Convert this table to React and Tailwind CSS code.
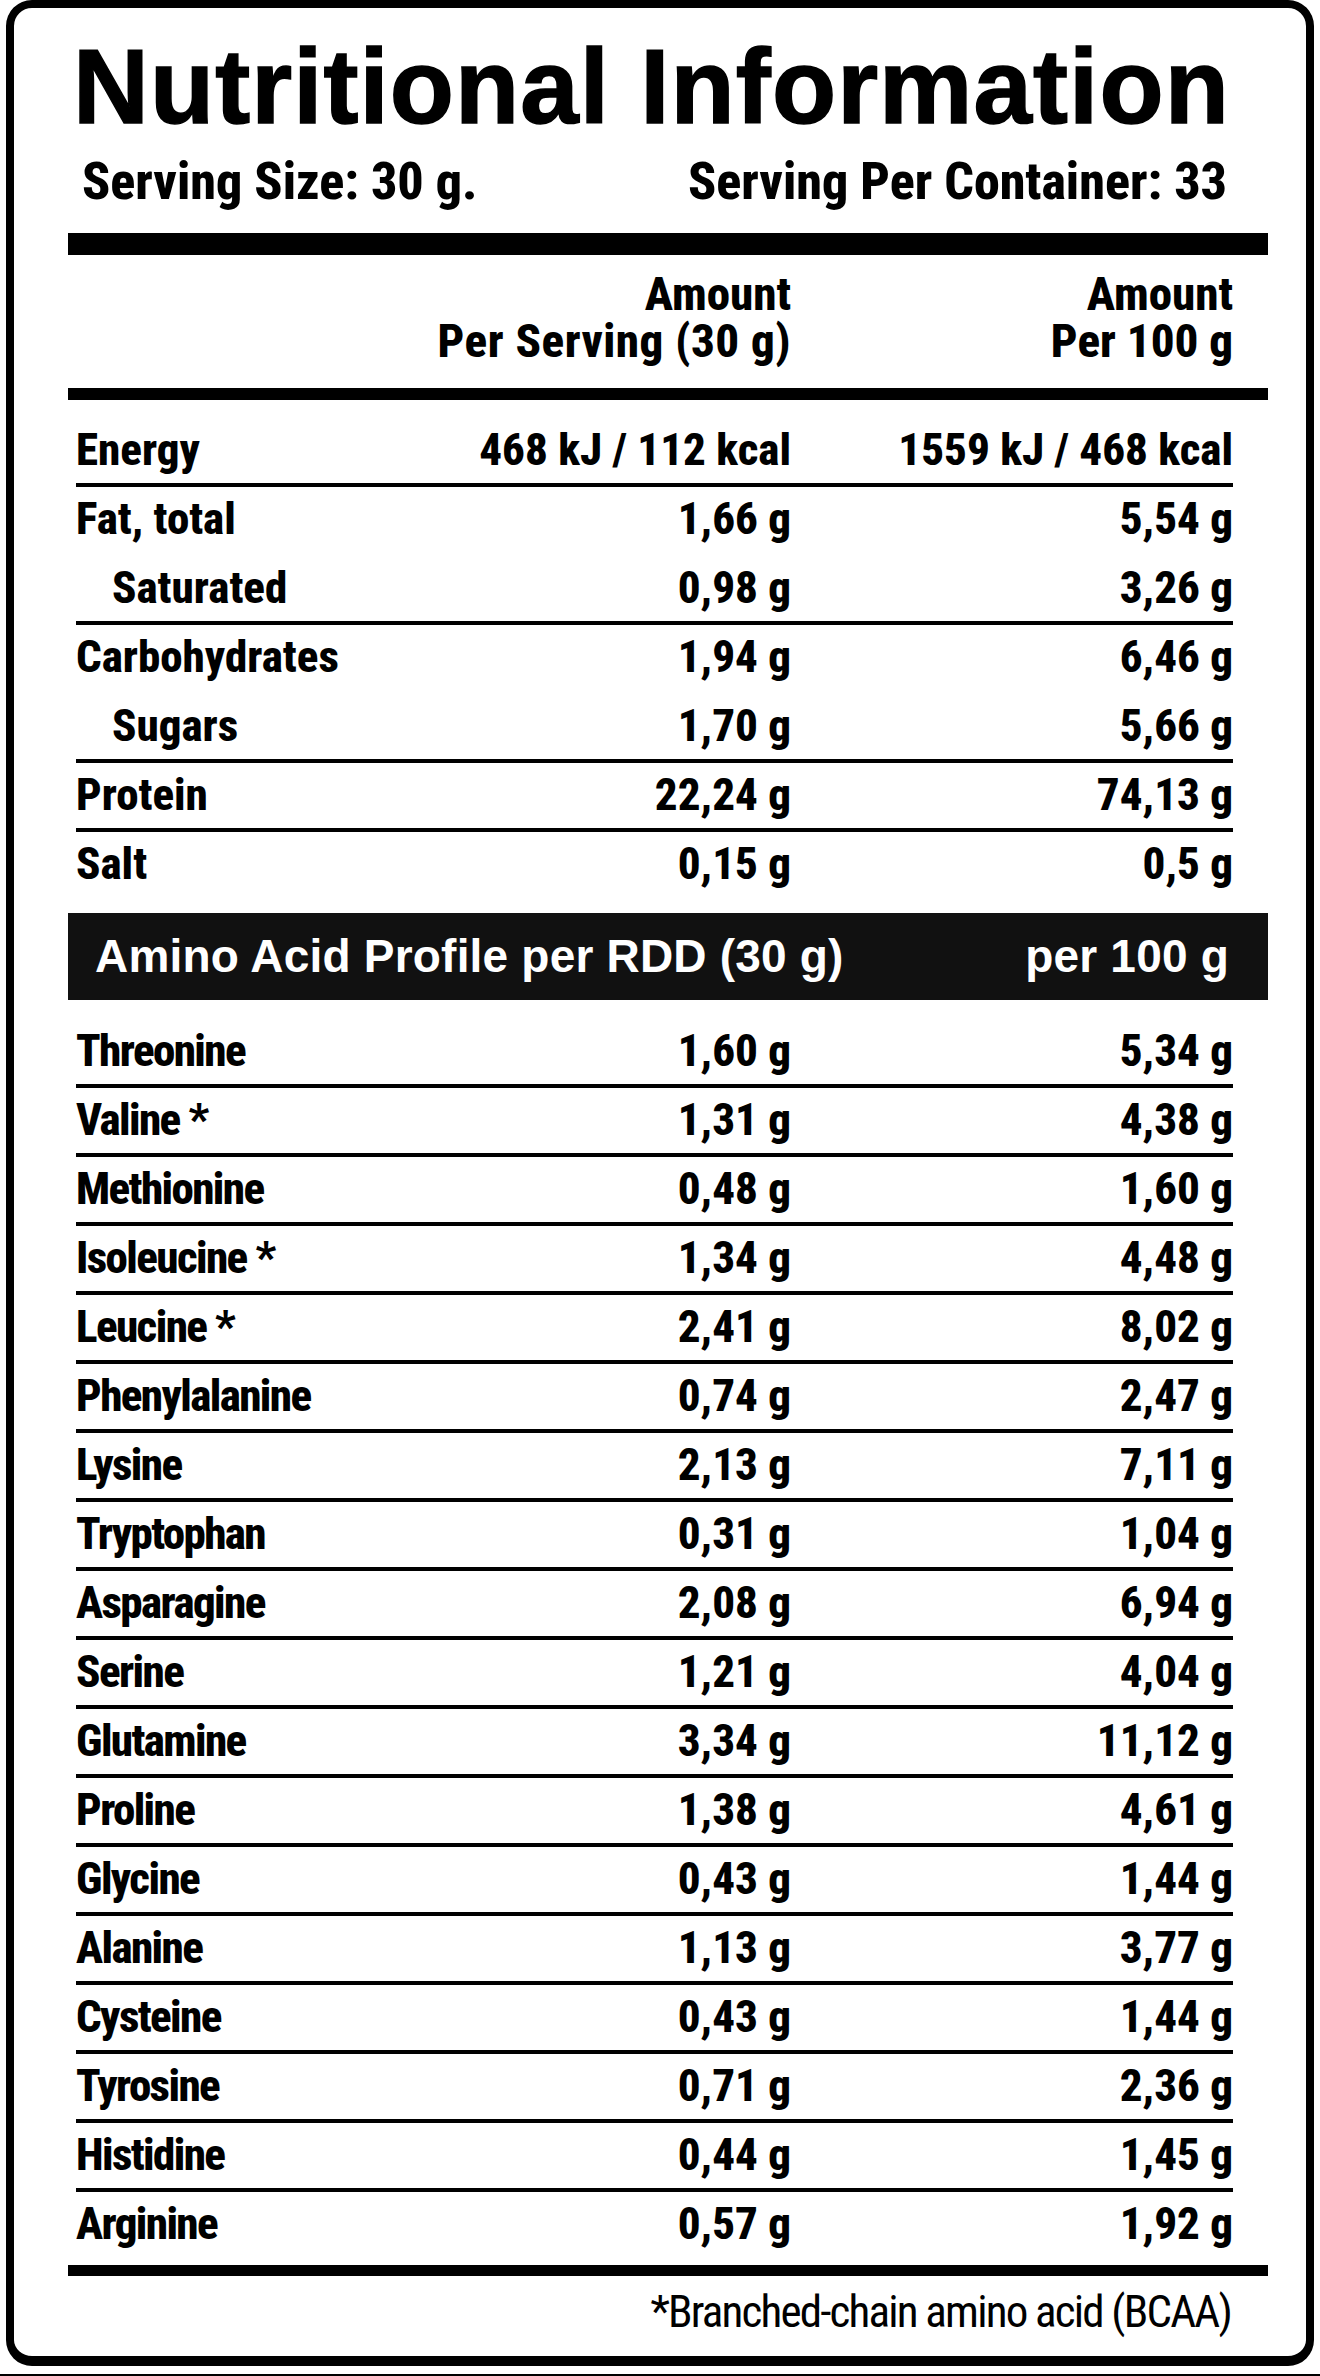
import React from 'react'

const nutrients = [
  { name: 'Energy', serving: '468 kJ / 112 kcal', per100: '1559 kJ / 468 kcal', line: true },
  { name: 'Fat, total', serving: '1,66 g', per100: '5,54 g' },
  { name: 'Saturated', serving: '0,98 g', per100: '3,26 g', sub: true, line: true },
  { name: 'Carbohydrates', serving: '1,94 g', per100: '6,46 g' },
  { name: 'Sugars', serving: '1,70 g', per100: '5,66 g', sub: true, line: true },
  { name: 'Protein', serving: '22,24 g', per100: '74,13 g', line: true },
  { name: 'Salt', serving: '0,15 g', per100: '0,5 g' },
]

const aminos = [
  ['Threonine', '1,60 g', '5,34 g'],
  ['Valine *', '1,31 g', '4,38 g'],
  ['Methionine', '0,48 g', '1,60 g'],
  ['Isoleucine *', '1,34 g', '4,48 g'],
  ['Leucine *', '2,41 g', '8,02 g'],
  ['Phenylalanine', '0,74 g', '2,47 g'],
  ['Lysine', '2,13 g', '7,11 g'],
  ['Tryptophan', '0,31 g', '1,04 g'],
  ['Asparagine', '2,08 g', '6,94 g'],
  ['Serine', '1,21 g', '4,04 g'],
  ['Glutamine', '3,34 g', '11,12 g'],
  ['Proline', '1,38 g', '4,61 g'],
  ['Glycine', '0,43 g', '1,44 g'],
  ['Alanine', '1,13 g', '3,77 g'],
  ['Cysteine', '0,43 g', '1,44 g'],
  ['Tyrosine', '0,71 g', '2,36 g'],
  ['Histidine', '0,44 g', '1,45 g'],
  ['Arginine', '0,57 g', '1,92 g'],
]

const condensed = { fontFamily: '"Roboto Condensed", Roboto, sans-serif', fontStretch: 'condensed' }

const Row = ({ name, serving, per100, sub, line, tight }) => (
  <div className={`flex h-[69px] border-b-4 ${line ? 'border-black' : 'border-transparent'}`}>
    <div className={`flex-1 leading-[64px] ${sub ? 'pl-[36px]' : ''} ${tight ? 'tracking-[-1.6px]' : ''}`}>{name}</div>
    <div className="w-[400px] text-right leading-[64px]">{serving}</div>
    <div className="w-[442px] text-right leading-[64px]">{per100}</div>
  </div>
)

export default function App() {
  return (
    <div className="w-[1320px] h-[2376px] bg-white overflow-hidden text-black">
      <div className="ml-[6px] w-[1308px] h-[2366px] border-[8px] border-b-[10px] border-black rounded-[26px]">
        <div className="ml-[54px] w-[1200px] pt-[26px]">
          {/* title */}
          <h1
            className="pl-[5px] text-[105px] leading-[105px] font-bold tracking-[1.1px] [-webkit-text-stroke:1.5px_black]"
            style={{ fontFamily: '"Liberation Sans", Arial, sans-serif' }}
          >
            Nutritional Information
          </h1>

          <div
            className="mt-[17px] pl-[14px] pr-[41px] flex justify-between text-[52px] leading-[52px] font-extrabold"
            style={condensed}
          >
            <span>Serving Size: 30 g.</span>
            <span>Serving Per Container: 33</span>
          </div>

          <div className="mt-[25px] h-[22px] bg-black"></div>

          <div className="mt-[15px] ml-[8px] w-[1157px] flex text-[47px] font-extrabold" style={condensed}>
            <div className="flex-1"></div>
            <div className="w-[400px] text-right">
              <div className="h-[47px] leading-[47px]">Amount</div>
              <div className="h-[47px] leading-[47px] tracking-[0.5px]">Per Serving (30 g)</div>
            </div>
            <div className="w-[442px] text-right">
              <div className="h-[47px] leading-[47px]">Amount</div>
              <div className="h-[47px] leading-[47px]">Per 100 g</div>
            </div>
          </div>

          <div className="mt-[24px] h-[12px] bg-black"></div>

          <div className="mt-[18px] ml-[8px] w-[1157px] text-[45px] font-extrabold" style={condensed}>
            {nutrients.map((n) => (
              <Row key={n.name} {...n} />
            ))}
          </div>

          {/* amino header */}
          <div
            className="mt-[12px] h-[87px] bg-[#111] text-white flex justify-between pl-[27px] pr-[39px] text-[46px] leading-[87px] font-bold tracking-[0.2px]"
            style={{ fontFamily: '"Liberation Sans", Arial, sans-serif' }}
          >
            <span>Amino Acid Profile per RDD (30 g)</span>
            <span>per 100 g</span>
          </div>

          <div className="mt-[19px] ml-[8px] w-[1157px] text-[45px] font-extrabold" style={condensed}>
            {aminos.map(([name, s, p], i) => (
              <Row key={name} name={name} serving={s} per100={p} line={i < aminos.length - 1} tight />
            ))}
          </div>

          <div className="mt-[4px] h-[11px] bg-black"></div>

          <div className="mt-[13px] pr-[37px] text-right text-[45px] leading-[45px] tracking-[-1.8px]" style={condensed}>
            *Branched-chain amino acid (BCAA)
          </div>
        </div>
      </div>
      <div className="mt-[8px] h-[2px] bg-black"></div>
    </div>
  )
}
